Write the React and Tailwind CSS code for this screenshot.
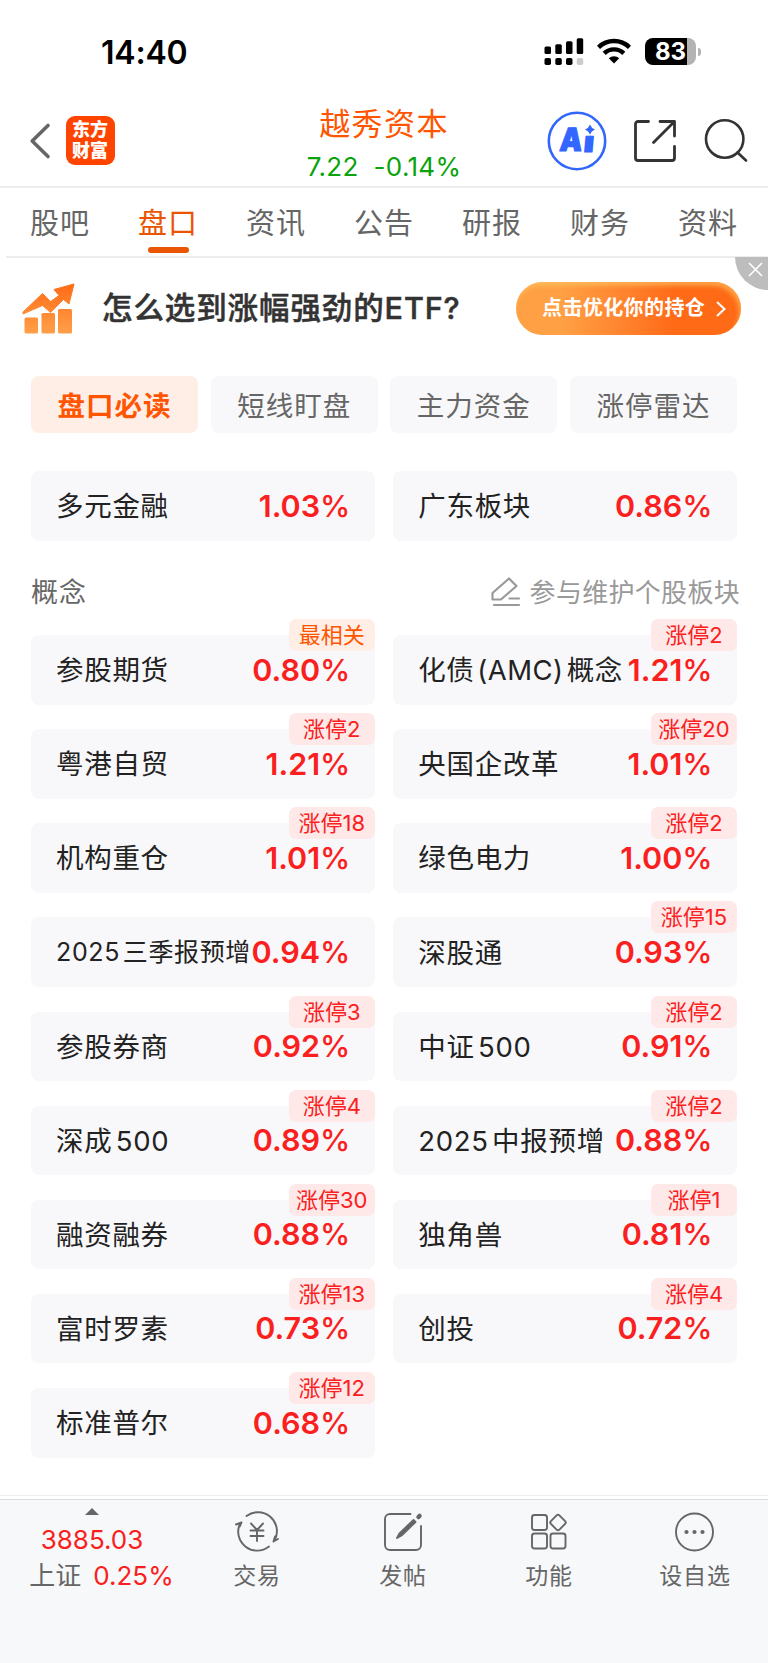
import React from 'react';
import clsx from 'clsx';

const tabs = ['股吧', '盘口', '资讯', '公告', '研报', '财务', '资料'];
const segments = ['盘口必读', '短线盯盘', '主力资金', '涨停雷达'];

const sectors = [
  { name: '多元金融', value: '1.03' },
  { name: '广东板块', value: '0.86' },
];

const concepts = [
  { name: '参股期货', value: '0.80', tag: '最相关', hot: true },
  { name: '化债 (AMC) 概念', value: '1.21', tag: '涨停2', tight: true },
  { name: '粤港自贸', value: '1.21', tag: '涨停2' },
  { name: '央国企改革', value: '1.01', tag: '涨停20' },
  { name: '机构重仓', value: '1.01', tag: '涨停18' },
  { name: '绿色电力', value: '1.00', tag: '涨停2' },
  { name: '2025 三季报预增', value: '0.94', small: true },
  { name: '深股通', value: '0.93', tag: '涨停15' },
  { name: '参股券商', value: '0.92', tag: '涨停3' },
  { name: '中证 500', value: '0.91', tag: '涨停2' },
  { name: '深成 500', value: '0.89', tag: '涨停4' },
  { name: '2025 中报预增', value: '0.88', tag: '涨停2' },
  { name: '融资融券', value: '0.88', tag: '涨停30' },
  { name: '独角兽', value: '0.81', tag: '涨停1' },
  { name: '富时罗素', value: '0.73', tag: '涨停13' },
  { name: '创投', value: '0.72', tag: '涨停4' },
  { name: '标准普尔', value: '0.68', tag: '涨停12' },
];

const StatusBar = () => (
  <div className="flex h-[96px] items-start justify-between pl-[101px] pr-[67px] text-black">
    <div className="mt-[33px] text-[32px] font-semibold leading-[40px] tracking-[-0.2px]">14:40</div>
    <div className="mt-[38px] flex items-start">
      <svg width="40" height="28" viewBox="0 0 40 28">
        <rect x="0.5" y="8.5" width="6.5" height="7.5" rx="1.5" />
        <rect x="11.3" y="6.3" width="6.5" height="9.7" rx="1.5" />
        <rect x="22" y="3.2" width="6.5" height="12.8" rx="1.5" />
        <rect x="32.7" y="0.2" width="6.5" height="15.8" rx="1.5" />
        <rect x="0.5" y="20" width="6.5" height="7" rx="1.8" />
        <rect x="11.3" y="20" width="6.5" height="7" rx="1.8" />
        <rect x="22" y="20" width="6.5" height="7" rx="1.8" />
        <rect x="32.7" y="20" width="6.5" height="7" rx="1.8" fill="#ccc" />
      </svg>
      <svg className="ml-[13px]" width="34" height="28" viewBox="0 0 34 28" fill="none" stroke="#000">
        <path d="M1.5 9.3a22.3 22.3 0 0 1 31 0" strokeWidth="4.4" />
        <path d="M7.2 15.4a14 14 0 0 1 19.6 0" strokeWidth="4.4" />
        <path d="M11.8 20.2a7.6 7.6 0 0 1 10.4 0L17 25.6z" fill="#000" stroke="none" />
      </svg>
      <div className="ml-[14px] flex h-[27px] w-[51px] items-center overflow-hidden rounded-[8px] bg-linear-to-r from-black from-[83%] to-[#b3b3b3] to-[83%] pl-[10px]">
        <span className="text-[24px] font-bold leading-none text-white">83</span>
      </div>
      <div className="ml-[2px] mt-[10px] h-[8px] w-[3px] rounded-r-full bg-[#b3b3b3]" />
    </div>
  </div>
);

const AiIcon = () => (
  <svg width="60" height="60" viewBox="0 0 60 60">
    <circle cx="30" cy="30" r="28.2" fill="none" stroke="#3366ff" strokeWidth="2.6" />
    <g fill="#3366ff" stroke="#3366ff" strokeWidth="1.2" strokeLinejoin="round" fontWeight="900" fontSize="32">
      <text x="15.5" y="40" transform="skewX(-5)" textLength="22.5" lengthAdjust="spacingAndGlyphs">A</text>
      <text x="39.6" y="41.2" fontSize="29" transform="skewX(-5)" textLength="10.5" lengthAdjust="spacingAndGlyphs">i</text>
    </g>
    <rect x="36.5" y="12" width="14" height="12.5" fill="#fff" />
    <path d="M43 13.5q1.3 3.7 5 5-3.7 1.3-5 5-1.3-3.7-5-5 3.7-1.3 5-5z" fill="#3366ff" />
  </svg>
);

const Header = () => (
  <div className="grid h-[92px] grid-cols-[248px_1fr_248px] border-b-2 border-[#ededed]">
    <div className="flex h-[90px] items-center pl-[29px]">
      <svg width="22" height="38" viewBox="0 0 22 38" fill="none" stroke="#666" strokeWidth="3.6" strokeLinecap="round" strokeLinejoin="round">
        <path d="M19 3.5 3.2 19 19 34.5" />
      </svg>
      <div className="ml-[14.5px] mb-[1px] flex h-[49px] w-[49px] flex-col items-center justify-center rounded-[9px] bg-[#ff4400] text-[18px] font-black leading-[20.5px] text-white">
        <span>东方</span>
        <span>财富</span>
      </div>
    </div>
    <div className="flex flex-col items-center">
      <h1 className="mt-[8px] text-[31px] leading-[40px] tracking-[1.4px] text-[#ff5500]">越秀资本</h1>
      <div className="mt-[6px] flex gap-[15px] text-[26px] leading-[34px] tracking-[0.3px] text-[#0aa30a]">
        <span>7.22</span>
        <span>-0.14%</span>
      </div>
    </div>
    <div className="flex h-[90px] items-center pl-[27px]">
      <AiIcon />
      <svg className="ml-[26px]" width="44" height="44" viewBox="0 0 44 44" fill="none" stroke="#333" strokeWidth="2.8" strokeLinecap="round" strokeLinejoin="round">
        <path d="M15.5 2.5H5A2.5 2.5 0 0 0 2.5 5v34A2.5 2.5 0 0 0 5 41.5h34a2.5 2.5 0 0 0 2.5-2.5V27.5M27 2.5h14.5V17M41 3 20.5 23.5" />
      </svg>
      <svg className="ml-[26px]" width="46" height="46" viewBox="0 0 46 46" fill="none" stroke="#333" strokeWidth="2.6" strokeLinecap="round">
        <circle cx="21.7" cy="21" r="18.7" />
        <path d="M34.5 34.5l8.5 8" />
      </svg>
    </div>
  </div>
);

const TabBar = () => (
  <div className="ml-[6px] grid h-[70px] grid-cols-7 border-b-2 border-[#ededed] pr-[6px]">
    {tabs.map((tab, i) => (
      <div key={tab} className={clsx('flex flex-col items-center text-[29px] tracking-[1px]', i === 1 ? 'text-[#ea5504]' : 'text-[#666]')}>
        <span className="mt-[15px] leading-[42px]">{tab}</span>
        {i === 1 && <span className="mt-[2px] h-[6px] w-[41px] rounded-full bg-[#ea5504]" />}
      </div>
    ))}
  </div>
);

const Banner = () => (
  <div className="relative flex h-[118px] items-start pl-[22px]">
    <svg className="mt-[25px]" width="53" height="51" viewBox="0 0 53 51">
      <defs>
        <linearGradient id="rise" x1="0" y1="0" x2="0" y2="51" gradientUnits="userSpaceOnUse">
          <stop offset="0" stopColor="#ff6a14" />
          <stop offset="1" stopColor="#ffa04a" />
        </linearGradient>
      </defs>
      <g fill="url(#rise)">
        <path d="M1 29 L20.5 10.5 28.5 18.5 37 12.5 32 6.5 52 1 47 21 41.5 16.5 28.5 29.5 20.5 22.5 1 31z" stroke="url(#rise)" strokeLinejoin="round" />
        <rect x="2.5" y="34.5" width="13.5" height="16" rx="1.5" />
        <rect x="19.5" y="30" width="13.5" height="20.5" rx="1.5" />
        <rect x="36" y="26" width="14" height="24.5" rx="1.5" />
      </g>
    </svg>
    <div className="ml-[27px] mt-[29px] text-[30.5px] font-medium leading-[42px] tracking-[0.9px] text-[#333] [-webkit-text-stroke:0.5px_#333]">怎么选到涨幅强劲的ETF?</div>
    <div className="absolute left-[516px] top-[24px] flex h-[53px] w-[225px] items-center rounded-full bg-linear-to-r from-[#ffa044] from-20% to-[#ff6a16] to-70% pb-[2px] pl-[26px] text-[20px] font-bold tracking-[0.4px] text-white shadow-[inset_-2px_4px_4px_rgba(255,200,100,0.6)]">
      点击优化你的持仓
      <svg className="ml-[10px] mt-[3px]" width="12" height="18" viewBox="0 0 12 18" fill="none" stroke="#fff" strokeWidth="2">
        <path d="M2 2l7.5 7L2 16" />
      </svg>
    </div>
    <div className="absolute right-0 top-[-1px] h-[33px] w-[33px] rounded-bl-full bg-[#bdbdbd]">
      <svg width="33" height="33" viewBox="0 0 33 33" stroke="#fff" strokeWidth="1.6">
        <path d="M14 6l13 13M27 6 14 19" />
      </svg>
    </div>
  </div>
);

const StockCard = ({ item }) => (
  <div className="relative flex h-[69.5px] items-center rounded-[8px] bg-[#f8f8fa] pl-[25px]">
    <span
      className={clsx(
        'mt-[2px] whitespace-nowrap text-[#222] [word-spacing:-5px]',
        item.small && 'text-[25px] tracking-[0.65px]',
        item.tight && 'text-[27.5px] tracking-[0.45px]',
        !item.small && !item.tight && 'text-[27.5px] tracking-[0.7px]'
      )}
    >
      {item.name}
    </span>
    <span className="absolute right-[25px] text-[30.5px] font-semibold leading-none text-[#fa2020]">
      {item.value}
      <span className="font-medium tracking-[-0.6px]">%</span>
    </span>
    {item.tag && (
      <span
        className={clsx(
          'absolute right-0 top-[-16px] flex h-[32px] w-[86px] items-center justify-center rounded-[7px] text-[22px] leading-none',
          item.hot ? 'bg-[#ffeee5] text-[#ff5500]' : 'bg-[#fee8e8] text-[#fa2020]'
        )}
      >
        {item.tag}
      </span>
    )}
  </div>
);

const NavItem = ({ label, children }) => (
  <div className="flex flex-col items-center">
    <svg className="mt-[10px]" width="46" height="44" viewBox="0 0 46 44" fill="none" stroke="#666" strokeWidth="1.9" strokeLinecap="round" strokeLinejoin="round">
      {children}
    </svg>
    <span className="mt-[4px] text-[23px] leading-[36px] tracking-[0.8px] text-[#666]">{label}</span>
  </div>
);

const BottomBar = () => (
  <div className="mt-[3px] grid h-[164px] grid-cols-[184px_146px_146px_146px_146px] border-t border-[#d8dee3] bg-[#f7f8fa]">
    <div className="flex flex-col items-center text-[26px] text-[#fa2020]">
      <svg className="mt-[8px]" width="14" height="7" viewBox="0 0 14 7">
        <path d="M7 0l7 7H0z" fill="#666" />
      </svg>
      <div className="mt-[7px] leading-[36px]">3885.03</div>
      <div className="flex gap-[12px] pl-[19px] leading-[36px]">
        <span className="text-[#666]">上证</span>
        <span>0.25%</span>
      </div>
    </div>
    <NavItem label="交易">
      <path d="M12.5 6A19 19 0 0 1 41 29.5M39.5 31.5l1.5-5M39.5 31.5l4.5-2.5M35 36.5A19 19 0 0 1 5.8 14M7.5 12.5l-1.7 4M7.5 12.5 2 14.5" />
      <path d="M17 13.5l6 6.5 6-6.5M16.5 20.5h13M16.5 26h13M23 20.5v10.5" />
    </NavItem>
    <NavItem label="发帖">
      <path d="M30.5 4H10a5 5 0 0 0-5 5v26a5 5 0 0 0 5 5h26a5 5 0 0 0 5-5V16" />
      <path d="M17 28l2.5-4.5L33.5 10l2 2L21.5 25.5z" fill="#666" />
      <path d="M38.5 7l1-1" strokeWidth="4.5" />
    </NavItem>
    <NavItem label="功能">
      <rect x="6" y="5" width="15" height="15" rx="2.5" />
      <rect x="6" y="23.5" width="15" height="15" rx="2.5" />
      <rect x="24.5" y="23.5" width="15" height="15" rx="2.5" />
      <rect x="26" y="6.5" width="12" height="12" rx="2" transform="rotate(45 32 12.5)" />
    </NavItem>
    <NavItem label="设自选">
      <circle cx="22.5" cy="22" r="18.5" />
      <g fill="#666" stroke="none">
        <circle cx="14.5" cy="22" r="2.1" />
        <circle cx="22.5" cy="22" r="2.1" />
        <circle cx="30.5" cy="22" r="2.1" />
      </g>
    </NavItem>
  </div>
);

const App = () => {
  return (
    <div className="flex h-[1663px] w-[768px] flex-col overflow-hidden bg-white font-['Inter','Noto_Sans_CJK_SC',sans-serif]">
      <StatusBar />
      <Header />
      <TabBar />
      <Banner />

      <div className="grid grid-cols-4 gap-[12.5px] px-[31px]">
        {segments.map((label, i) => (
          <div
            key={label}
            className={clsx(
              'flex h-[57px] items-center justify-center rounded-[8px] pt-[4px] text-[27.5px] tracking-[1px]',
              i === 0 ? 'bg-[#ffeee5] font-bold text-[#ff5500]' : 'bg-[#f8f8fa] text-[#666]'
            )}
          >
            {label}
          </div>
        ))}
      </div>

      <div className="mt-[38px] grid grid-cols-2 gap-x-[18.5px] px-[31px]">
        {sectors.map((item) => (
          <StockCard key={item.name} item={item} />
        ))}
      </div>

      <div className="mt-[28.5px] flex h-[46px] items-center justify-between pl-[31px] pr-[28px]">
        <span className="pt-[3px] text-[27px] tracking-[1px] text-[#666]">概念</span>
        <span className="flex items-center text-[26px] tracking-[0.3px] text-[#999]">
          <svg className="mr-[9px]" width="30" height="30" viewBox="0 0 30 30" fill="none" stroke="#999" strokeWidth="2.2" strokeLinecap="round" strokeLinejoin="round">
            <path d="M1.5 16 18 1.5l7.5 7.5L10 22.5H1.5zM18.5 21.5h9.5M3 28h25" />
          </svg>
          参与维护个股板块
        </span>
      </div>

      <div className="mt-[20px] grid grid-cols-2 gap-x-[18.5px] gap-y-[24.63px] px-[31px]">
        {concepts.map((item) => (
          <StockCard key={item.name} item={item} />
        ))}
      </div>

      <div className="mt-auto border-t border-[#ededed]" />
      <BottomBar />
    </div>
  );
};

export default App;
